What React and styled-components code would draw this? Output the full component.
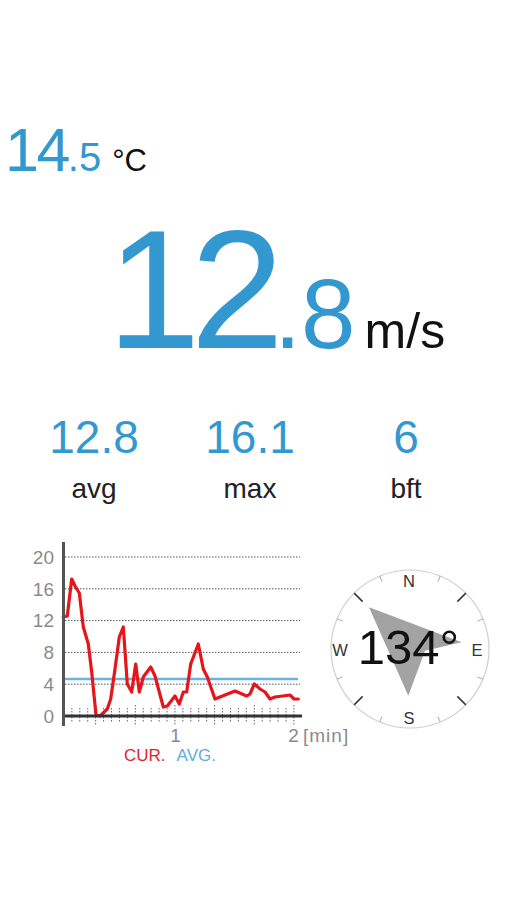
import React from 'react';
import styled, { createGlobalStyle } from 'styled-components';

const BLUE = '#3498d0';
const RED = '#e6151b';

const GlobalStyle = createGlobalStyle`
  body {
    margin: 0;
    background: #fff;
    font-family: "Liberation Sans", Arial, sans-serif;
  }
`;

const Page = styled.div`
  width: 507px;
  height: 900px;
  display: flex;
  flex-direction: column;
  color: #111;
`;

const TempRow = styled.div`
  display: flex;
  align-items: baseline;
  margin-top: 120px;
  padding-left: 5px;
`;

const Num = styled.span`
  color: ${BLUE};
  font-size: ${(p) => p.size}px;
  line-height: 1;
  letter-spacing: ${(p) => p.track || 0}px;
`;

const Unit = styled.span`
  color: #111;
  font-size: ${(p) => p.size}px;
  line-height: 1;
  margin-left: ${(p) => p.gap}px;
`;

const SpeedRow = styled.div`
  display: flex;
  align-items: baseline;
  margin-top: 25px;
  padding-left: 107px;
`;

const Stats = styled.div`
  display: grid;
  grid-template-columns: repeat(3, 156px);
  padding: 0 16px;
  margin-top: 40px;
`;

const Stat = styled.div`
  display: flex;
  flex-direction: column;
  align-items: center;
`;

const StatValue = styled.span`
  color: ${BLUE};
  font-size: 46px;
  line-height: 1;
`;

const StatLabel = styled.span`
  color: #222;
  font-size: 28px;
  line-height: 1;
  margin-top: 15px;
`;

const Bottom = styled.div`
  display: flex;
  align-items: flex-start;
  margin-top: 36px;
`;

const ChartBox = styled.div`
  width: 328px;
  display: flex;
  flex-direction: column;
`;

const ChartSvg = styled.svg`
  display: block;
  overflow: visible;
`;

const Legend = styled.div`
  display: flex;
  gap: 11px;
  padding-left: 124px;
  font-size: 17px;
  line-height: 1;
`;

const LegendItem = styled.span`
  color: ${(p) => p.color};
`;

const CompassSvg = styled.svg`
  display: block;
  margin-top: 28px;
`;

const points = [
  [63.3, 618], [67.3, 617], [71.7, 580], [75, 587], [79.3, 594], [83.3, 628],
  [88.3, 645], [91.7, 673], [96, 716], [100, 717], [107.3, 710], [110.7, 700],
  [115, 670], [119.3, 638], [123.3, 628], [127.3, 685], [131.7, 693], [135.7, 665],
  [139.3, 693], [143.3, 678], [150.7, 668], [155, 677], [163.3, 708], [167.3, 707],
  [175, 697], [179.3, 705], [183.3, 693], [186.7, 693], [190.7, 665], [198.3, 645],
  [203.3, 670], [207.3, 678], [215, 700], [220, 698], [235, 692], [246.7, 697],
  [250, 695], [254.3, 685], [260, 690], [265, 693], [270, 700], [275, 698],
  [290, 696], [294, 700], [298.3, 700],
];

const grid = [20, 16, 12, 8, 4, 0];
const yOf = (v) => 717 - v * 7.95;
const axisFont = 'Liberation Sans, Arial, sans-serif';

function Chart() {
  const ticks = Array.from({ length: 30 }, (_, i) => i + 1);
  return (
    <ChartSvg width="328" height="208" viewBox="0 540 328 208">
      {grid.map((v) => (
        <g key={v}>
          {v > 0 && (
            <line x1="65" x2="300" y1={yOf(v)} y2={yOf(v)} stroke="#555" strokeWidth="1" strokeDasharray="1.5 1.5" />
          )}
          <text x="54" y={yOf(v) + 6.7} textAnchor="end" fontSize="19" fill="#8a8a8a" fontFamily={axisFont}>{v}</text>
        </g>
      ))}
      {ticks.map((i) => {
        const x = 56 + i * 7.93;
        const major = i % 5 === 0;
        return (
          <line key={i} x1={x} x2={x} y1={major ? 706 : 709} y2={major ? 727 : 724}
            stroke="#666" strokeWidth="1" strokeDasharray="1.5 1.5" />
        );
      })}
      <line x1="64" x2="298" y1="680" y2="680" stroke="#6cb2df" strokeWidth="2.5" />
      <polyline points={points.map((p) => p.join(',')).join(' ')} fill="none" stroke={RED}
        strokeWidth="3.2" strokeLinejoin="round" strokeLinecap="round" />
      <line x1="62" x2="302" y1="717" y2="717" stroke="#333" strokeWidth="3" />
      <line x1="63.5" x2="63.5" y1="543" y2="727" stroke="#555" strokeWidth="3" />
      <text x="175.5" y="743.3" textAnchor="middle" fontSize="19" fill="#8a8a8a" fontFamily={axisFont}>1</text>
      <text x="293.5" y="743.3" textAnchor="middle" fontSize="19" fill="#8a8a8a" fontFamily={axisFont}>2</text>
      <text x="303" y="743.3" fontSize="19" letterSpacing="1" fill="#8a8a8a" fontFamily={axisFont}>[min]</text>
    </ChartSvg>
  );
}

function Compass() {
  const c = 82;
  const dirs = Array.from({ length: 16 }, (_, i) => i * 22.5).filter((a) => a % 90 !== 0);
  return (
    <CompassSvg width="164" height="164" viewBox="0 0 164 164">
      <circle cx={c} cy={c} r="79" fill="none" stroke="#cfcfcf" strokeWidth="1.2" />
      {dirs.map((a) => {
        const major = a % 45 === 0;
        const rad = (a * Math.PI) / 180;
        const r1 = major ? 67 : 73;
        const r2 = 79;
        return (
          <line key={a}
            x1={c + r1 * Math.sin(rad)} y1={c - r1 * Math.cos(rad)}
            x2={c + r2 * Math.sin(rad)} y2={c - r2 * Math.cos(rad)}
            stroke={major ? '#333' : '#aaa'} strokeWidth={major ? 1.5 : 1} />
        );
      })}
      <polygon points="41,40.3 133.7,75.3 97,83.7 80.3,128.7" fill="#a3a3a3" />
      <text x="81" y="20" textAnchor="middle" fontSize="16.5" fill="#333" fontFamily={axisFont}>N</text>
      <text x="81" y="157" textAnchor="middle" fontSize="16.5" fill="#333" fontFamily={axisFont}>S</text>
      <text x="12" y="89" textAnchor="middle" fontSize="16.5" fill="#333" fontFamily={axisFont}>W</text>
      <text x="149" y="89" textAnchor="middle" fontSize="16.5" fill="#333" fontFamily={axisFont}>E</text>
      <text x="80.5" y="97" textAnchor="middle" fontSize="49" fill="#111" fontFamily={axisFont}>134°</text>
    </CompassSvg>
  );
}

const stats = [
  { value: '12.8', label: 'avg' },
  { value: '16.1', label: 'max' },
  { value: '6', label: 'bft' },
];

export default function App() {
  return (
    <>
      <GlobalStyle />
      <Page>
        <TempRow>
          <Num size={61} track={-2.5}>14</Num>
          <Num size={40}>.5</Num>
          <Unit size={31} gap={11}>°C</Unit>
        </TempRow>
        <SpeedRow>
          <Num size={168} track={-10}>12</Num>
          <Num size={98}>.8</Num>
          <Unit size={50} gap={9}>m/s</Unit>
        </SpeedRow>
        <Stats>
          {stats.map((s) => (
            <Stat key={s.label}>
              <StatValue>{s.value}</StatValue>
              <StatLabel>{s.label}</StatLabel>
            </Stat>
          ))}
        </Stats>
        <Bottom>
          <ChartBox>
            <Chart />
            <Legend>
              <LegendItem color="#d9262b">CUR.</LegendItem>
              <LegendItem color="#5aaee0">AVG.</LegendItem>
            </Legend>
          </ChartBox>
          <Compass />
        </Bottom>
      </Page>
    </>
  );
}
